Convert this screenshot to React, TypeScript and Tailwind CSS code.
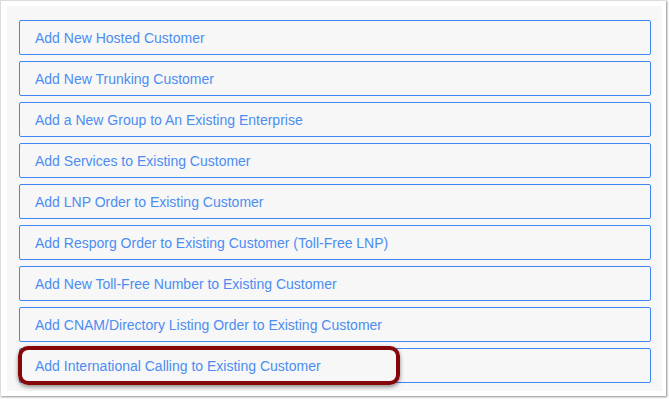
import React from 'react';

const actions = [
  'Add New Hosted Customer',
  'Add New Trunking Customer',
  'Add a New Group to An Existing Enterprise',
  'Add Services to Existing Customer',
  'Add LNP Order to Existing Customer',
  'Add Resporg Order to Existing Customer (Toll-Free LNP)',
  'Add New Toll-Free Number to Existing Customer',
  'Add CNAM/Directory Listing Order to Existing Customer',
  'Add International Calling to Existing Customer',
];

const ActionButton = ({ label }: { label: string }) => (
  <button className="flex h-[35px] w-[632px] items-center rounded-[2px] border border-[#3f87f5] bg-[#f7f7f7] pl-[15px] pt-[2px] text-left text-[14px] text-[#4b8df2]">
    {label}
  </button>
);

export default function App() {
  return (
    <div className="relative h-[399px] w-[669px] bg-white font-['Liberation_Sans',Arial,sans-serif]">
      {/* screenshot frame with its drop shadow */}
      <div className="h-[396px] w-[666px] border-l border-t border-[#dcdcdc] bg-white pl-[6px] pt-[5px] shadow-[1px_1px_2px_rgba(0,0,0,0.45)]">
        <div className="flex h-[385px] w-[655px] flex-col gap-[6px] bg-[#f7f7f7] pl-[12px] pt-[14px]">
          {actions.map((a) => (
            <ActionButton key={a} label={a} />
          ))}
        </div>
      </div>

      {/* highlight annotation */}
      <div className="absolute left-[18px] top-[346px] h-[39px] w-[382px] rounded-[10px] border-[4px] border-[#860709] shadow-[0_2px_4px_rgba(0,0,0,0.45)]" />
    </div>
  );
}
